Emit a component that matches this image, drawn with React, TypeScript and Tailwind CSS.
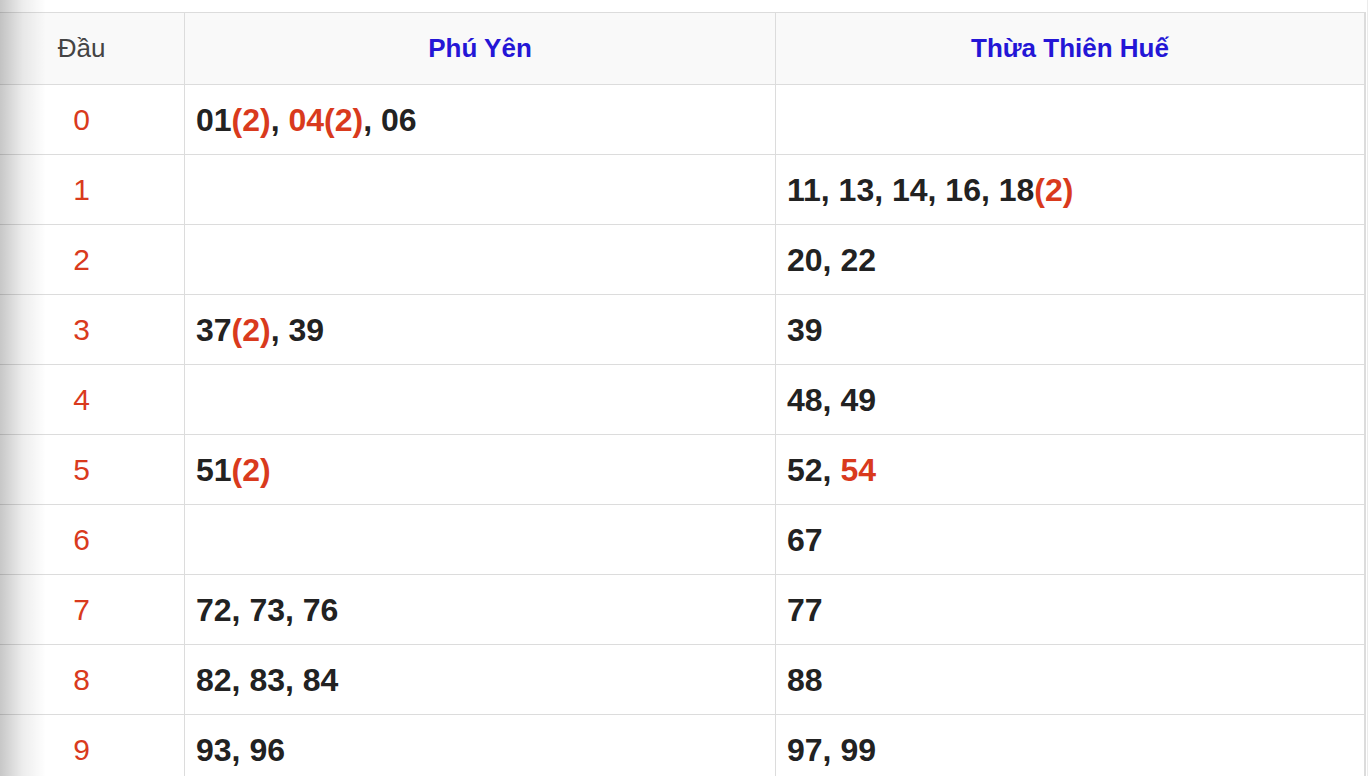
const rows: [string, string][] = [
  ["01{(2)}, {04(2)}, 06", ""],
  ["", "11, 13, 14, 16, 18{(2)}"],
  ["", "20, 22"],
  ["37{(2)}, 39", "39"],
  ["", "48, 49"],
  ["51{(2)}", "52, {54}"],
  ["", "67"],
  ["72, 73, 76", "77"],
  ["82, 83, 84", "88"],
  ["93, 96", "97, 99"],
];

// text wrapped in {} is drawn in red
function Loto({ text }: { text: string }) {
  const parts = text.split(/(\{[^}]*\})/).filter(Boolean);
  return (
    <span className="whitespace-pre">
      {parts.map((p, i) =>
        p.startsWith("{") ? (
          <span key={i} className="text-[#d93a1d]">
            {p.slice(1, -1)}
          </span>
        ) : (
          <span key={i}>{p}</span>
        )
      )}
    </span>
  );
}

export default function App() {
  return (
    <div className="relative w-[1372px] h-[776px] overflow-hidden bg-white font-['Liberation_Sans',Arial,sans-serif] flex">
      {/* left edge shadow */}
      <div className="absolute inset-y-0 left-0 w-[46px] bg-gradient-to-r from-[rgba(0,0,0,0.22)] via-[rgba(0,0,0,0.07)] to-transparent pointer-events-none" />

      <div className="w-[1366px] shrink-0 pt-[12px]">
        <div className="border-t border-[#dcdcdc]">
          {/* header */}
          <div className="grid grid-cols-[185px_591px_590px] h-[72px] bg-[#f9f9f9] border-b border-[#dcdcdc]">
            <div className="flex items-center justify-center pr-[21px] border-r border-[#dcdcdc] text-[26px] text-[#444]">
              Đầu
            </div>
            <div className="flex items-center justify-center border-r border-[#dcdcdc] text-[26px] font-bold text-[#2416d6]">
              Phú Yên
            </div>
            <div className="flex items-center justify-center border-r-2 border-[#dcdcdc] text-[26px] font-bold text-[#2416d6]">
              Thừa Thiên Huế
            </div>
          </div>

          {rows.map(([py, tth], i) => (
            <div
              key={i}
              className="grid grid-cols-[185px_591px_590px] h-[70px] border-b border-[#dcdcdc]"
            >
              <div className="flex items-center justify-center pr-[21px] border-r border-[#dcdcdc] text-[30px] text-[#d93a1d]">
                {i}
              </div>
              <div className="flex items-center pl-[11px] border-r border-[#dcdcdc] text-[32px] font-bold text-[#222]">
                <Loto text={py} />
              </div>
              <div className="flex items-center pl-[11px] border-r-2 border-[#dcdcdc] text-[32px] font-bold text-[#222]">
                <Loto text={tth} />
              </div>
            </div>
          ))}
        </div>
      </div>

      <div className="w-[1px] shrink-0" />
      <div className="w-[1px] shrink-0 bg-[#ebebeb]" />
    </div>
  );
}
